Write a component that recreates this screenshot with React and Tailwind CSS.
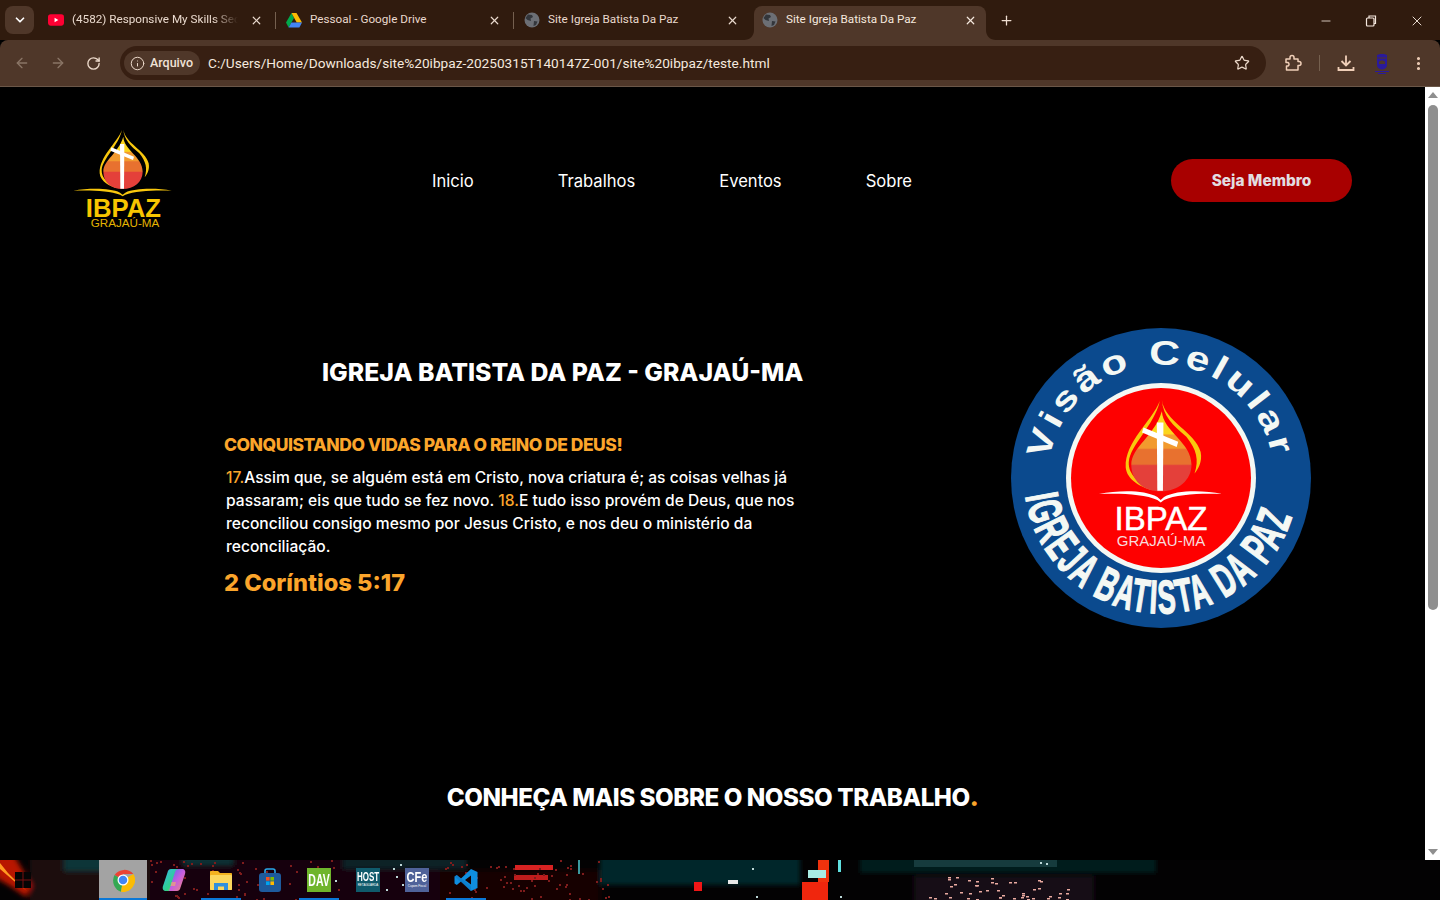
import { ArrowLeft, ArrowRight, RotateCw, Info, Star, EllipsisVertical, ChevronDown, X, Plus, Minus } from 'lucide-react';

const poppins = 'font-["Inter","Noto_Sans",sans-serif]';
const segoe = 'font-["Roboto","Noto_Sans",sans-serif]';

const GlobeFav = () => (
  <svg width="16" height="16" viewBox="0 0 16 16">
    <circle cx="8" cy="8" r="7.5" fill="#6c6f75" />
    <path d="M4 2.5 L8 3 L9 5 L6.5 6.5 L7 9 L3.5 8 L1.5 6 Z M10 9 L13.5 9.5 L12 13 L9.5 14 Z" fill="#33363b" />
  </svg>
);

const YoutubeFav = () => (
  <svg width="17" height="12" viewBox="0 0 17 12">
    <rect width="17" height="12" rx="3" fill="#ff0033" />
    <path d="M7 3.5 L11 6 L7 8.5 Z" fill="#fff" />
  </svg>
);

const DriveFav = () => (
  <svg width="16" height="15" viewBox="0 0 16 15">
    <path d="M5.5 0 L0 9.5 L2.6 14.5 L8 5 Z" fill="#00a94b" />
    <path d="M5.5 0 H10.5 L16 9.5 H10.7 Z" fill="#fbbc04" />
    <path d="M5.4 9.5 H16 L13.4 14.5 H2.6 Z" fill="#4285f4" />
  </svg>
);

const tabs = [
  { title: '(4582) Responsive My Skills Sect', icon: <YoutubeFav />, fade: true },
  { title: 'Pessoal - Google Drive', icon: <DriveFav /> },
  { title: 'Site Igreja Batista Da Paz', icon: <GlobeFav /> },
];

const Tab = ({ title, icon, fade, showSeparator }) => (
  <div className="relative flex h-[34px] w-[238px] shrink-0 items-center pb-[6px] pl-2 pr-[15px]">
    <span className="flex w-4 shrink-0 justify-center">{icon}</span>
    <span className={`ml-2 w-[166px] overflow-hidden whitespace-nowrap text-[11.7px] text-[#e9d9cd] ${fade ? 'mask-r-from-85%' : ''}`}>
      {title}
    </span>
    <X size={13} strokeWidth={2.2} className="ml-auto text-[#e9d9cd]" />
    {showSeparator && <span className="absolute right-[2px] top-[6px] h-[17px] w-px bg-[#75604f]" />}
  </div>
);

const TabFoot = ({ side }) => (
  <svg
    width="10"
    height="10"
    viewBox="0 0 10 10"
    className={`absolute bottom-0 ${side === 'left' ? '-left-[10px]' : '-right-[10px] -scale-x-100'}`}
  >
    <path d="M0 10 C6 10 10 6 10 0 V10 Z" fill="#4f3729" />
  </svg>
);

const TabStrip = () => (
  <div className={`flex h-10 shrink-0 items-end bg-[#301b0e] ${segoe}`}>
    <div className="mb-[6px] ml-[5px] mr-[6px] flex h-7 w-[29px] items-center justify-center rounded-lg bg-[#4f3729]">
      <ChevronDown size={14} strokeWidth={3} className="text-white" />
    </div>
    {tabs.map((tab, i) => (
      <Tab key={i} {...tab} showSeparator={i < 2} />
    ))}
    <div className="relative flex h-[34px] w-[232px] shrink-0 items-center rounded-t-lg bg-[#4f3729] pb-[6px] pl-2 pr-[9px]">
      <TabFoot side="left" />
      <TabFoot side="right" />
      <GlobeFav />
      <span className="ml-2 whitespace-nowrap text-[11.7px] text-[#f5e8de]">Site Igreja Batista Da Paz</span>
      <X size={13} strokeWidth={2.2} className="ml-auto text-[#f5e8de]" />
    </div>
    <div className="mb-[12px] ml-[13px]">
      <Plus size={15} strokeWidth={2} className="text-[#f0dfd2]" />
    </div>
    <div className="mb-[11px] ml-auto flex items-center gap-[31px] pr-[15px] text-[#f5e8de]">
      <Minus size={14} strokeWidth={1.4} />
      <svg width="14" height="14" viewBox="0 0 14 14" fill="none" stroke="currentColor" strokeWidth="1.2">
        <rect x="2.5" y="4" width="7.5" height="8" rx="1" />
        <path d="M5 4 V2 H11.5 V9.5 H10" />
      </svg>
      <X size={16} strokeWidth={1.4} />
    </div>
  </div>
);

const ExtensionIcon = () => (
  <svg width="18" height="18" viewBox="0 0 18 18" fill="none" stroke="currentColor" strokeWidth="1.5" strokeLinejoin="round">
    <path d="M2 5 H6 V3.5 A2 2 0 0 1 10 3.5 V5 H14 V7.5 H15 A1.8 1.8 0 0 1 15 11.5 H14 V16 H2.5 V12 H4 A2 2 0 0 0 4 8.5 H2 Z" />
  </svg>
);

const DownloadIcon = () => (
  <svg width="18" height="18" viewBox="0 0 18 18" fill="none" stroke="currentColor" strokeWidth="1.8">
    <path d="M9 1.5 V11 M4.5 7 L9 11.5 L13.5 7" />
    <path d="M1.5 13 V16 H16.5 V13" />
  </svg>
);

const ProfileIcon = () => (
  <svg width="16" height="21" viewBox="0 0 16 21" fill="none">
    <path d="M3 2 C5 .5 11 .5 13 2 V12 C13 15 10 16.5 8 16.5 C6 16.5 3 15 3 12 Z" fill="#2a1a9c" />
    <path d="M3.5 5 H12.5" stroke="#4f3729" strokeWidth="1" />
    <path d="M5 9 C6 7 10 7 11 9 V11 H5 Z" fill="#4f3729" />
    <path d="M1 18.5 H15 M4 20.5 H12" stroke="#2a1a9c" strokeWidth="1.1" />
  </svg>
);

const Toolbar = () => (
  <div className={`flex h-[47px] shrink-0 items-center rounded-t-lg border-b border-[#6b5748] bg-[#4f3729] ${segoe}`}>
    <div className="flex w-[120px] shrink-0 items-center gap-[20px] pl-[14px]">
      <ArrowLeft size={16} strokeWidth={2} className="text-[#8a7566]" />
      <ArrowRight size={16} strokeWidth={2} className="text-[#8a7566]" />
      <RotateCw size={15} strokeWidth={2.2} className="text-[#ecd9ca]" />
    </div>
    <div className="flex h-[34px] w-[1146px] items-center rounded-full bg-[#371f12] pl-1 pr-4">
      <div className="flex h-6 items-center gap-[5px] rounded-full bg-[#4f3729] pl-[6px] pr-[7px]">
        <Info size={15} strokeWidth={1.6} className="text-[#ecd9ca]" />
        <span className="text-[12.5px] font-medium text-[#f0e2d7]">Arquivo</span>
      </div>
      <span className="ml-2 whitespace-nowrap text-[13.67px] text-[#f5e9df]">
        C:/Users/Home/Downloads/site%20ibpaz-20250315T140147Z-001/site%20ibpaz/teste.html
      </span>
      <Star size={16} strokeWidth={1.8} className="ml-auto text-[#ecd9ca]" />
    </div>
    <div className="flex flex-1 items-center pl-[18px] text-[#f0cfb8]">
      <ExtensionIcon />
      <span className="ml-[17px] h-4 w-px bg-[#75604f]" />
      <span className="ml-[17px]">
        <DownloadIcon />
      </span>
      <span className="ml-[19px]">
        <ProfileIcon />
      </span>
      <EllipsisVertical size={17} strokeWidth={2.4} className="ml-[20px]" />
    </div>
  </div>
);

const Flame = () => (
  <g>
    <path d="M186 30 C170 70 117 110 119 160 C121 185 150 200 172 205 C145 190 124 175 125 150 C128 115 174 80 186 30 Z" fill="#f9c80e" />
    <path d="M190 28 C195 70 255 90 266 130 C270 150 260 165 254 172 C263 145 258 125 238 100 C212 78 192 60 190 28 Z" fill="#f9c80e" />
    <path
      d="M190 50 C192 90 248 110 248 155 C248 185 222 207 188 207 C152 207 130 185 130 155 C130 120 175 100 190 50 Z"
      fill="url(#flameBands)"
    />
    <path d="M180 72 H193 L192 206 H181 Z" fill="#fff" />
    <path d="M154 82 L222 110 L219 120 L151 92 Z" fill="#fff" />
  </g>
);

const Book = ({ color }) => (
  <path
    d="M40 212 C90 204 150 204 180 218 L188 224 L196 218 C225 204 290 204 335 212 C290 210 225 212 196 224 L188 229 L180 224 C150 212 90 210 40 212 Z"
    fill={color}
  />
);

const FlameGradient = () => (
  <defs>
    <linearGradient id="flameBands" x1="0" y1="0" x2="0" y2="1">
      <stop offset="0" stopColor="#fbd51c" />
      <stop offset="0.28" stopColor="#fbd51c" />
      <stop offset="0.3" stopColor="#f29a2e" />
      <stop offset="0.46" stopColor="#f29a2e" />
      <stop offset="0.48" stopColor="#e8712f" />
      <stop offset="0.66" stopColor="#e8712f" />
      <stop offset="0.68" stopColor="#e4403a" />
      <stop offset="1" stopColor="#e4403a" />
    </linearGradient>
  </defs>
);

const HeaderLogo = () => (
  <svg width="130" height="115" viewBox="0 0 390 345" className="-ml-[13px] -mr-[17px] mb-[5px] shrink-0">
    <FlameGradient />
    <Flame />
    <Book color="#f9c80e" />
    <text x="190" y="291" textAnchor="middle" fontFamily="Liberation Sans" fontWeight="700" fontSize="77" fill="#f7c600">
      IBPAZ
    </text>
    <text x="195" y="321" textAnchor="middle" fontFamily="Liberation Sans" fontSize="35" fill="#e5b400">
      GRAJAÚ-MA
    </text>
  </svg>
);

const BadgeLogo = () => (
  <svg width="300" height="300" viewBox="0 0 300 300" className="shrink-0">
    <FlameGradient />
    <defs>
      <path id="badgeTop" d="M38.4 132 A113 113 0 0 1 261.6 132" />
      <path id="badgeBottom" d="M14.4 168 A137 137 0 0 0 285.6 168" />
    </defs>
    <circle cx="150" cy="150" r="150" fill="#0b4a8e" />
    <circle cx="150" cy="150" r="95" fill="#f4f8f4" />
    <circle cx="150" cy="150" r="90" fill="#fe0000" />
    <text fontFamily="Liberation Sans" fontWeight="700" fontSize="34" fill="#f4f8f4" letterSpacing="3">
      <textPath href="#badgeTop" textLength="318" lengthAdjust="spacingAndGlyphs">
        Visão Celular
      </textPath>
    </text>
    <text fontFamily="Liberation Sans" fontWeight="700" fontSize="47" fill="#f4f8f4" stroke="#f4f8f4" strokeWidth="1.4" letterSpacing="4">
      <textPath href="#badgeBottom" textLength="372" lengthAdjust="spacingAndGlyphs">
        IGREJA BATISTA DA PAZ
      </textPath>
    </text>
    <g transform="translate(54 57.7) scale(0.51)">
      <Flame />
    </g>
    <g transform="translate(71.3 60) scale(0.417 0.5)">
      <Book color="#fff" />
    </g>
    <text x="150" y="202" textAnchor="middle" fontFamily="Liberation Sans" fontSize="33" fill="#fff" stroke="#fff" strokeWidth="0.5">
      IBPAZ
    </text>
    <text x="150" y="218" textAnchor="middle" fontFamily="Liberation Sans" fontSize="15" fill="#f8dcdc">
      GRAJAÚ-MA
    </text>
  </svg>
);

const navLinks = ['Inicio', 'Trabalhos', 'Eventos', 'Sobre'];

const Nav = () => (
  <nav className="flex h-[186px] items-center justify-between px-[73px]">
    <HeaderLogo />
    <ul className="flex items-center gap-[84px] pt-[2px] text-[16.6px] text-white">
      {navLinks.map((link) => (
        <li key={link}>{link}</li>
      ))}
    </ul>
    <button className="h-[43px] w-[181px] rounded-full bg-[#a80000] pt-[1px] text-[15.4px] font-extrabold text-[#e2dde0]">
      Seja Membro
    </button>
  </nav>
);

const Hero = () => (
  <section className="mt-[55px] flex items-center justify-between pl-[224px] pr-[114px]">
    <div className="w-[580px]">
      <h1 className="-mt-[2px] ml-[98px] whitespace-nowrap text-[24.8px] font-extrabold leading-9 text-white">
        IGREJA BATISTA DA PAZ - GRAJAÚ-MA
      </h1>
      <h2 className="mt-[41px] whitespace-nowrap text-[17.5px] font-extrabold leading-7 tracking-[-0.48px] text-[#fba52b]">
        CONQUISTANDO VIDAS PARA O REINO DE DEUS!
      </h2>
      <p className="ml-[2px] mt-[7px] text-[15.6px] font-medium leading-[23px] text-white">
        <span className="text-[#fba52b]">17.</span>Assim que, se alguém está em Cristo, nova criatura é; as coisas velhas já passaram; eis que tudo se fez novo. <span className="text-[#fba52b]">18.</span>E tudo isso provém de Deus, que nos reconciliou consigo mesmo por Jesus Cristo, e nos deu o ministério da reconciliação.
      </p>
      <p className="mt-[7px] text-[23.6px] font-extrabold leading-9 text-[#fba52b]">2 Coríntios 5:17</p>
    </div>
    <BadgeLogo />
  </section>
);

const Scrollbar = () => (
  <div className="flex w-[15px] shrink-0 flex-col items-center bg-white pt-[5px]">
    <span className="h-0 w-0 border-x-[5px] border-b-[6px] border-x-transparent border-b-[#8f8f8f]" />
    <span className="ml-[1px] mt-[7px] h-[505px] w-[10px] rounded-full bg-[#8f8f8f]" />
    <span className="mb-[5px] mt-auto h-0 w-0 border-x-[5px] border-t-[6px] border-x-transparent border-t-[#8f8f8f]" />
  </div>
);

// pontos de luz do papel de parede: sequencia fixa, nao muda entre renders
const spread = (i, seed, size) => Math.floor(Math.abs(Math.sin(i * seed) * 9973)) % size;
const redSpecks = Array.from({ length: 130 }, (_, i) => [
  i % 2 === 0 ? 150 + spread(i, 1.7, 190) : 440 + spread(i, 2.3, 170),
  spread(i, 3.1, 40),
]);
const cityLights = Array.from({ length: 46 }, (_, i) => {
  const y = 17 + spread(i, 1.3, 23);
  return [914 + (17 * 3 - y) + spread(i, 4.7, 150), y];
});
const tealLights = [[393, 8], [396, 16], [402, 24], [386, 29], [400, 4], [335, 20], [752, 8], [756, 36], [840, 36], [1040, 2], [1046, 3]];

const Wallpaper = () => (
  <svg width="1440" height="40" viewBox="0 0 1440 40" className="absolute inset-0">
    <defs>
      <filter id="soft" x="-20%" y="-50%" width="140%" height="200%">
        <feGaussianBlur stdDeviation="2.5" />
      </filter>
      <filter id="softSmall" x="-50%" y="-50%" width="200%" height="200%">
        <feGaussianBlur stdDeviation="0.7" />
      </filter>
    </defs>
    <rect width="1440" height="40" fill="#030203" />
    <g filter="url(#soft)">
      <rect x="30" y="-5" width="130" height="50" fill="#1c0709" />
      <rect x="64" y="-5" width="40" height="16" fill="#0b3438" />
      <rect x="150" y="-5" width="290" height="50" fill="#130507" />
      <rect x="183" y="-5" width="50" height="10" fill="#0a3236" />
      <rect x="343" y="-5" width="124" height="14" fill="#072326" />
      <rect x="440" y="10" width="160" height="35" fill="#120406" />
      <rect x="600" y="-5" width="200" height="30" fill="#05262a" />
      <rect x="860" y="-5" width="296" height="18" fill="#061a1e" />
      <rect x="914" y="16" width="180" height="30" fill="#181012" />
      <path d="M-4 -5 H14 L32 26 L26 37 L10 26 L-4 18 Z" fill="#b81806" />
    </g>
    <g filter="url(#softSmall)">
      <path d="M0 3 L8 13 L20 25 L27 31 L14 21 L0 9 Z" fill="#ff9a20" />
      <rect x="515" y="5" width="38" height="5" fill="#d82020" />
      <rect x="514" y="15" width="34" height="5" fill="#c01c1c" />
      <rect x="694" y="22" width="8" height="9" fill="#f01818" />
      <rect x="728" y="20" width="10" height="4" fill="#e8e8e8" />
      <rect x="802" y="22" width="26" height="18" fill="#f02808" />
      <rect x="818" y="0" width="11" height="22" fill="#f03010" />
      <rect x="808" y="10" width="18" height="8" fill="#a8ece4" />
      <rect x="838" y="0" width="3" height="12" fill="#60e0e0" />
      <rect x="578" y="0" width="2" height="14" fill="#3a9aa0" />
      <rect x="914" y="0" width="143" height="7" fill="#153a3e" />
      {redSpecks.map(([x, y], i) => (
        <rect key={i} x={x} y={y} width="2" height="2" fill="#7e1c1c" />
      ))}
    </g>
    {cityLights.map(([x, y], i) => (
      <rect key={i} x={x} y={y} width="3" height="1.5" fill="#e9aaa0" />
    ))}
    {tealLights.map(([x, y], i) => (
      <rect key={i} x={x} y={y} width="2" height="2" fill="#bcd8d8" />
    ))}
  </svg>
);

const StartIcon = () => (
  <svg width="16" height="16" viewBox="0 0 16 16">
    <rect width="16" height="16" fill="#050505" />
    <path d="M8 0 V16 M0 8 H16" stroke="#7a1010" strokeWidth="1" />
  </svg>
);

const ChromeIcon = () => (
  <svg width="24" height="24" viewBox="0 0 48 48">
    <path d="M24 24 L7 14 A24 24 0 0 1 44.8 12 H24 Z" fill="#ea4335" />
    <path d="M24 24 L7 14 A24 24 0 0 0 20 47.7 L24 24 Z" fill="#34a853" />
    <path d="M24 24 L44.8 12 A24 24 0 0 1 20 47.7 Z" fill="#fbbc04" />
    <circle cx="24" cy="24" r="11" fill="#fff" />
    <circle cx="24" cy="24" r="8.5" fill="#4285f4" />
  </svg>
);

const CopilotIcon = () => (
  <svg width="24" height="24" viewBox="0 0 24 24">
    <defs>
      <linearGradient id="copilotA" x1="0" y1="0" x2="1" y2="1">
        <stop offset="0" stopColor="#35b8f0" />
        <stop offset="0.6" stopColor="#2fd08a" />
        <stop offset="1" stopColor="#f5d63a" />
      </linearGradient>
      <linearGradient id="copilotB" x1="0" y1="0" x2="1" y2="1">
        <stop offset="0" stopColor="#4b6bf0" />
        <stop offset="0.5" stopColor="#c55de0" />
        <stop offset="1" stopColor="#f58a70" />
      </linearGradient>
    </defs>
    <path d="M9 1 H17 L11 20 C10.5 22 9 23 7 23 H4 C1.5 23 0 21 1 18 L5.5 4.5 C6 2.5 7 1 9 1 Z" fill="url(#copilotA)" />
    <path d="M15 23 H7 L13 4 C13.5 2 15 1 17 1 H20 C22.5 1 24 3 23 6 L18.5 19.5 C18 21.5 17 23 15 23 Z" fill="url(#copilotB)" />
    <path d="M9.5 14 H14 L13 18 H8.5 Z" fill="#f4b860" opacity="0.6" />
  </svg>
);

const FolderIcon = () => (
  <svg width="22" height="19" viewBox="0 0 22 19">
    <path d="M0 1 C0 .4 .4 0 1 0 H8 L10 2 H21 C21.6 2 22 2.4 22 3 V18 C22 18.6 21.6 19 21 19 H1 C.4 19 0 18.6 0 18 Z" fill="#f3b21f" />
    <rect x="0" y="4" width="22" height="15" rx="1" fill="#fbd75e" />
    <path d="M4 19 V12 H18 V19 H14 V15.5 H8 V19 Z" fill="#2f8fdc" />
  </svg>
);

const StoreIcon = () => (
  <svg width="24" height="24" viewBox="0 0 24 24">
    <path d="M7 5 V3 C7 1.5 8 1 9 1 H15 C16 1 17 1.5 17 3 V5" fill="none" stroke="#28a8ea" strokeWidth="1.6" />
    <rect x="1" y="5" width="22" height="19" rx="3" fill="#1d5a9c" />
    <rect x="8" y="9" width="3.6" height="3.6" fill="#f25022" />
    <rect x="12.4" y="9" width="3.6" height="3.6" fill="#7fba00" />
    <rect x="8" y="13.4" width="3.6" height="3.6" fill="#00a4ef" />
    <rect x="12.4" y="13.4" width="3.6" height="3.6" fill="#ffb900" />
  </svg>
);

const VscodeIcon = () => (
  <svg width="24" height="24" viewBox="0 0 24 24">
    <path d="M17 1 L23.5 4 V20 L17 23 L7 13.5 L2.8 17 L.5 15.5 V8.5 L2.8 7 L7 10.5 Z M17 7.5 L11 12 L17 16.5 Z" fill="#0f8ee0" />
    <path d="M.5 8.5 L2.8 7 L17 18 V23 Z" fill="#0a6fb8" opacity="0.45" />
  </svg>
);

const TextTile = ({ className, label, small, labelClass }) => (
  <div className={`flex h-6 w-6 flex-col items-center justify-center leading-none text-white font-["Liberation_Sans",sans-serif] ${className}`}>
    <span className={`font-bold ${labelClass}`}>{label}</span>
    {small && <span className="mt-[2px] whitespace-nowrap text-[3px]">{small}</span>}
  </div>
);

const taskItems = [
  { key: 'start', width: 'w-[99px]', icon: <span className="ml-[15px] flex"><StartIcon /></span>, align: 'justify-start' },
  { key: 'chrome', width: 'w-[48px]', icon: <ChromeIcon />, active: true, bar: true },
  { key: 'copilot', width: 'w-[54px]', icon: <CopilotIcon /> },
  { key: 'files', width: 'w-[40px]', icon: <FolderIcon />, bar: true },
  { key: 'store', width: 'w-[58px]', icon: <StoreIcon /> },
  { key: 'dav', width: 'w-[40px]', icon: <TextTile className="bg-[#6fb52c]" label="DAV" labelClass="text-[10.5px] scale-y-150" />, bar: true },
  { key: 'host', width: 'w-[58px]', icon: <TextTile className="bg-[#0f5a6b]" label="HOST" small="RETAGUARDA" labelClass="text-[8px] scale-y-150" /> },
  { key: 'cfe', width: 'w-[40px]', icon: <TextTile className="bg-[#4f6299]" label="CFe" small="Cupom Fiscal" labelClass="text-[11px] scale-y-125" /> },
  { key: 'vscode', width: 'w-[58px]', icon: <VscodeIcon />, bar: true, barClass: 'mx-[9px]' },
];

const Taskbar = () => (
  <div className="relative h-10 shrink-0 overflow-hidden">
    <Wallpaper />
    <div className="relative flex h-10 items-stretch">
      {taskItems.map((item) => (
        <div
          key={item.key}
          className={`relative flex items-center ${item.align || 'justify-center'} ${item.width} ${item.active ? 'bg-[#a3a3a3]' : ''}`}
        >
          {item.icon}
          {item.bar && <span className={`absolute inset-x-0 bottom-0 h-[2px] bg-[#0a78d7] ${item.barClass || ''}`} />}
        </div>
      ))}
    </div>
  </div>
);

export default function App() {
  return (
    <div className="flex h-[900px] w-[1440px] flex-col overflow-hidden bg-black">
      <TabStrip />
      <Toolbar />
      <div className="flex h-[773px] shrink-0">
        <main className={`flex-1 overflow-hidden bg-black ${poppins}`}>
          <Nav />
          <Hero />
          <h2 className="mt-[152px] text-center text-[24.2px] font-extrabold leading-9 tracking-[-0.45px] text-white">
            CONHEÇA MAIS SOBRE O NOSSO TRABALHO<span className="font-black text-[#fba52b]">.</span>
          </h2>
        </main>
        <Scrollbar />
      </div>
      <Taskbar />
    </div>
  );
}
